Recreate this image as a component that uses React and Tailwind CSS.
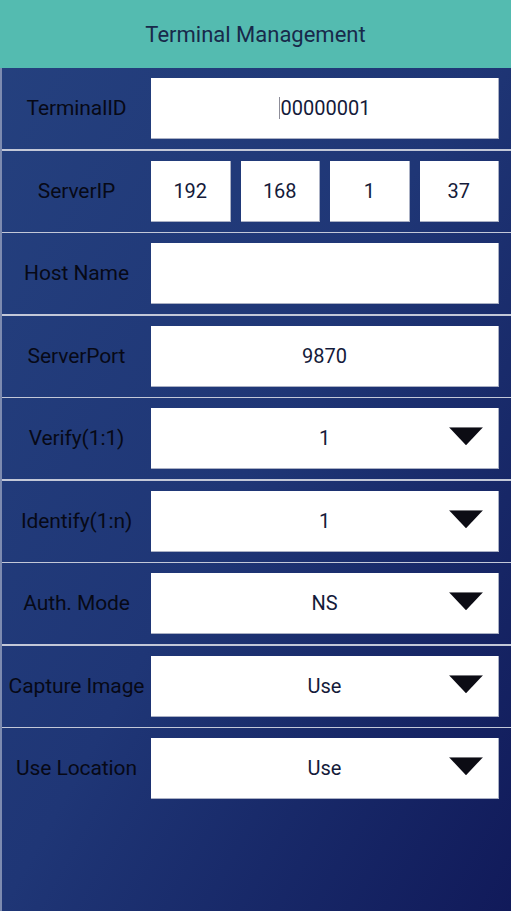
import React from "react";

const font = { fontFamily: "Roboto, 'Noto Sans', sans-serif" };

function Tri() {
  return (
    <svg width="34" height="18" viewBox="0 0 34 18" className="absolute right-[15px] top-1/2 -translate-y-[60%]">
      <polygon points="0,0 34,0 17,18" fill="#0c0c14" />
    </svg>
  );
}

function Box({ children, dropdown, className = "" }) {
  return (
    <div className={"relative h-[61px] bg-white flex items-center justify-center text-[20px] text-[#141a3a] border-r border-b border-[#aab0c4] " + className}>
      {children}
      {dropdown && <Tri />}
    </div>
  );
}

function Line({ label, children }) {
  return (
    <div className="flex h-[81px] items-center">
      <div className="w-[149px] text-center text-[21px] text-[#070916] leading-none whitespace-nowrap tracking-[-0.1px]">{label}</div>
      <div className="flex-1 pr-[12px]">{children}</div>
    </div>
  );
}

function Row({ label, children }) {
  return (
    <div className="flex flex-col">
      <Line label={label}>{children}</Line>
      <div className="h-[1.5px] bg-[#c3c8d8]" />
    </div>
  );
}

export default function App() {
  return (
    <div style={font} className="w-[511px] h-[911px] flex flex-col bg-gradient-to-br from-[#25417f] via-[#1f3676] to-[#111a5a] overflow-hidden">
      <div className="h-[68px] bg-[#54bbb0] flex items-center justify-center text-[22px] text-[#18294a]">
        Terminal Management
      </div>
      <div className="flex-1 flex flex-col border-l-2 border-[#7d8bb0]">
        <Row label="TerminalID">
          <Box>
            <span className="inline-block w-px h-[22px] bg-[#8d8d99] mr-px" />
            00000001
          </Box>
        </Row>
        <Row label="ServerIP">
          <div className="flex gap-[10px]">
            <Box className="flex-1">192</Box>
            <Box className="flex-1">168</Box>
            <Box className="flex-1">1</Box>
            <Box className="flex-1">37</Box>
          </div>
        </Row>
        <Row label="Host Name">
          <Box />
        </Row>
        <Row label="ServerPort">
          <Box>9870</Box>
        </Row>
        <Row label="Verify(1:1)">
          <Box dropdown>1</Box>
        </Row>
        <Row label="Identify(1:n)">
          <Box dropdown>1</Box>
        </Row>
        <Row label="Auth. Mode">
          <Box dropdown>NS</Box>
        </Row>
        <Row label="Capture Image">
          <Box dropdown>Use</Box>
        </Row>
        <Line label="Use Location">
          <Box dropdown>Use</Box>
        </Line>
      </div>
    </div>
  );
}
